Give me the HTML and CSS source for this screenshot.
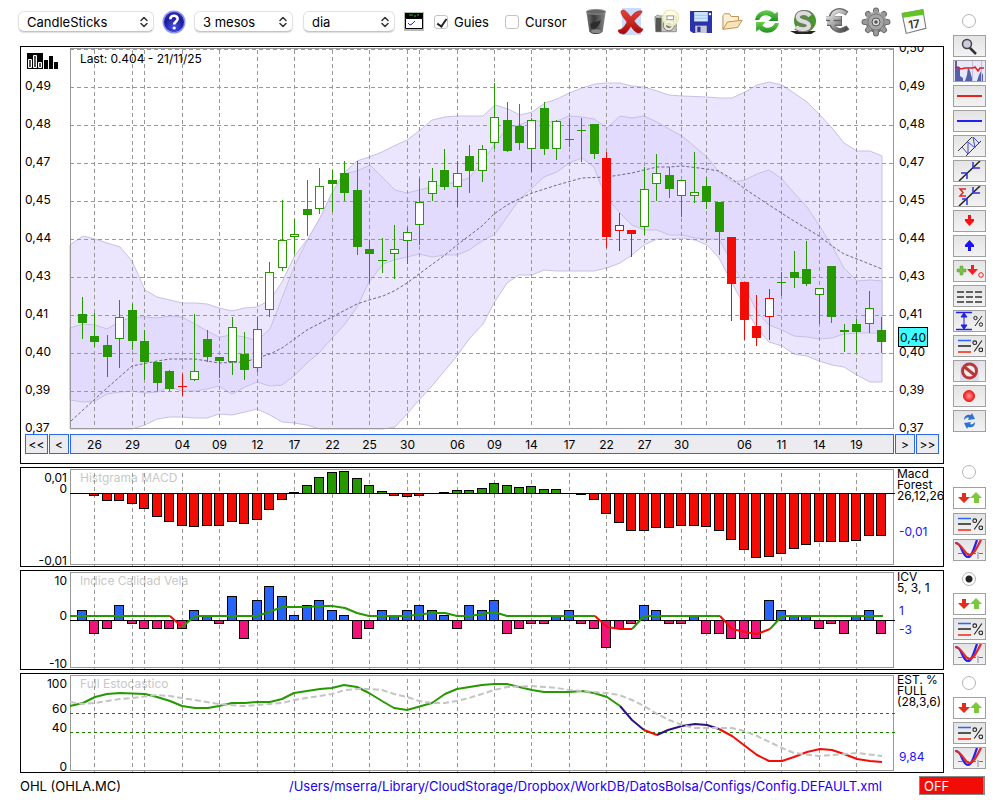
FILE: index.html
```
<!DOCTYPE html>
<html lang="ca">
<head>
    <meta charset="UTF-8">
    <meta name="viewport" content="width=device-width, initial-scale=1.0">
    <link rel="stylesheet" href="styles.css">
    <title>OHL (OHLA.MC)</title>
</head>
<body>
    <svg class="sprites" width="0" height="0" aria-hidden="true">
        <defs>
            <radialGradient id="g-help" cx=".5" cy=".75" r=".8"><stop offset="0" stop-color="#4a55e8"/><stop offset=".6" stop-color="#1c1c9c"/><stop offset="1" stop-color="#2c2cb8"/></radialGradient>
            <linearGradient id="g-bin"><stop offset="0" stop-color="#777"/><stop offset=".4" stop-color="#3a3a3a"/><stop offset="1" stop-color="#8a8a8a"/></linearGradient>
            <linearGradient id="g-red" x2="0" y2="1"><stop offset="0" stop-color="#e8433a"/><stop offset="1" stop-color="#a80808"/></linearGradient>
            <linearGradient id="g-green" x2="0" y2="1"><stop offset="0" stop-color="#6ad04a"/><stop offset="1" stop-color="#1f8f22"/></linearGradient>
            <linearGradient id="g-metal" x2="1" y2="1"><stop offset="0" stop-color="#f4f4f4"/><stop offset=".5" stop-color="#aaa"/><stop offset="1" stop-color="#444"/></linearGradient>
            <linearGradient id="g-steel" x2="0" y2="1"><stop offset="0" stop-color="#b4b4b4"/><stop offset="1" stop-color="#6a6a6a"/></linearGradient>
            <radialGradient id="g-dot"><stop offset="0" stop-color="#ff9a9a"/><stop offset="1" stop-color="#f01818"/></radialGradient>
        </defs>
        <symbol id="i-updown" viewBox="0 0 8 12"><path d="M1 4.5 4 1.5 7 4.5M1 7.5 4 10.5 7 7.5" fill="none" stroke="#333" stroke-width="1.5" stroke-linecap="round" stroke-linejoin="round"/></symbol>
        <symbol id="i-help" viewBox="0 0 24 24"><circle cx="12" cy="12" r="11.5" fill="#8f95f2"/><circle cx="12" cy="12" r="10" fill="url(#g-help)"/><path d="M8.3 9.2C8.3 4.6 15.8 4.8 15.6 9 15.4 11.4 12.2 11.6 12.2 14.6" fill="none" stroke="#fff" stroke-width="2.6"/><circle cx="12.2" cy="18" r="1.6" fill="#fff"/></symbol>
        <symbol id="i-window" viewBox="0 0 20 19"><path d="M0 0h20v19H0z" fill="#bbb"/><path d="M1 1h18v5H1z"/><path d="M5 3h4m1 1h2m1-1h2" stroke="#1c1" fill="none"/><path d="M1.500 6.500h17v10h-17z" fill="#fff" stroke="#000"/><path d="M4 11l2 2 2-1 3-3" fill="none" stroke="#22f"/></symbol>
        <symbol id="i-bin" viewBox="0 0 24 28"><path d="M2 4l3 20c2 4 12 4 14 0l3-20z" fill="url(#g-bin)"/><ellipse cx="12" cy="4" rx="10" ry="2.500" fill="#666" stroke="#8c8c8c"/><path d="M6 17c3-4 8-1 11-5-1 7-6 11-10 9z" fill="#2c2c30"/><ellipse cx="12" cy="24" rx="5" ry="2" fill="#888"/></symbol>
        <symbol id="i-delete" viewBox="0 0 26 27"><path d="M4 0h19v27H4z" fill="#c9dcfb"/><path d="M5 2c3 0 6 5 8 7 2-3 6-7 11-6 1 2-6 7-8 10 3 4 6 7 9 8-1 4-5 5-7 3-2-1-4-4-5-6-2 3-4 7-7 8-3 0-6-1-6-4 4 0 7-4 9-8C7 11 2 6 3 3z" fill="url(#g-red)" stroke="#a01010" stroke-width=".5"/></symbol>
        <symbol id="i-camera" viewBox="0 0 28 28"><path d="M1 9l3-2 2 1h18v17H2z" fill="#c8c8c0" stroke="#888"/><path d="M2 10h6v15H2z" fill="#555"/><circle cx="16" cy="18" r="6" fill="#e8e8e0" stroke="#777"/><circle cx="16" cy="18" r="3" fill="#777"/><circle cx="18" cy="10" r="8.500" fill="#fdfde0" fill-opacity=".75" stroke="#efebaa" stroke-width="1.500"/><rect x="14" y="8" width="7" height="4" fill="#fff" stroke="#999"/></symbol>
        <symbol id="i-save" viewBox="0 0 21 21"><path d="M0 0h21v21H3l-3-2z" fill="#2a33a8"/><path d="M4 1h13v9H4z" fill="#cfe6fb"/><path d="M4 4h13M4 7h13" stroke="#9bc4ec"/><path d="M5 14h11v7H5z" fill="#c8c8d4"/><path d="M7 15h3v5H7z" fill="#2a33a8"/><path d="M18 2h2v2h-2z" fill="#fff"/></symbol>
        <symbol id="i-folder" viewBox="0 0 24 20"><path d="M1 18V3l2-2h5l2 3h8v4" fill="#fdf0d0" stroke="#b98a4a"/><path d="M1 18l5-8 16-2-5 8z" fill="#fbe3b8" stroke="#b98a4a"/></symbol>
        <symbol id="i-refresh" viewBox="0 0 25 23"><path d="M1 10C3 0 15-2 20 4l3-2v9h-9l3-3C13 4 7 5 5 10z" fill="url(#g-green)"/><path d="M24 13C22 23 10 25 5 19l-3 2v-9h9l-3 3c4 4 10 3 12-2z" fill="url(#g-green)"/></symbol>
        <symbol id="i-dollar" viewBox="0 0 26 25"><path d="M0 22h26l-5 3H6z" fill="#222"/><circle cx="15" cy="12" r="11" fill="#49962f"/><path d="M14 1v4M14 19v4" stroke="#777" stroke-width="4"/><path d="M20 7C16 2 6 4 8 9c1 5 11 2 11 8-1 4-9 4-13 1" fill="none" stroke="#777" stroke-width="6"/><path d="M20 7C16 2 6 4 8 9c1 5 11 2 11 8-1 4-9 4-13 1" fill="none" stroke="#dcdcd8" stroke-width="4"/></symbol>
        <symbol id="i-euro" viewBox="0 0 26 26"><path d="M22 5C12-2 5 5 6 13s9 12 17 6M1 10h16M2 15h15" fill="none" stroke="#666" stroke-width="5"/><path d="M21 5C12-1 6 5 7 13s8 11 15 6M1 9.500h15M2 14.500h14" fill="none" stroke="url(#g-metal)" stroke-width="3.500"/></symbol>
        <symbol id="i-gear" viewBox="0 0 30 30"><path d="M15 3.500v23M3.500 15h23M7 7l16 16M23 7L7 23" stroke="#6c6c6c" stroke-width="6" stroke-linecap="round"/><circle cx="15" cy="15" r="10.500" fill="url(#g-steel)"/><path d="M15 3.500v23M3.500 15h23M7 7l16 16M23 7L7 23" stroke="#999" stroke-width="4" stroke-linecap="round"/><circle cx="15" cy="15" r="8" fill="#a6a6a6" stroke="#7c7c7c"/><circle cx="15" cy="15" r="4" fill="#ddd" stroke="#555"/><circle cx="15" cy="15" r="1.800" fill="#555"/></symbol>

        <symbol id="i-lens" viewBox="0 0 31 20"><path d="M15 11l7 7" stroke="#333" stroke-width="2.500"/><circle cx="13" cy="8" r="4.500" fill="#ccd" stroke="#444" stroke-width="1.500"/></symbol>
        <symbol id="i-history" viewBox="0 0 31 20"><path d="M0 0h31v20H0z" fill="#e8e8fa"/><path d="M1 20V0h2v6h3v9l3 2v3zM11 20l2-6 1-8 2 4 2 7v3zM23 20l2-6 2-4 2 4v6z" fill="#5560aa"/><path d="M18.500 0v20M27.500 0v20" stroke="#c0c0d8"/><path d="M1 7l3-1 3 2 4-1h8l2-1 3 4 2-3h4" fill="none" stroke="#e02020" stroke-width="1.500"/></symbol>
        <symbol id="i-redline" viewBox="0 0 31 20"><path d="M3 10h25" stroke="#e52222" stroke-width="2"/></symbol>
        <symbol id="i-blueline" viewBox="0 0 31 20"><path d="M3 10h25" stroke="#2222ee" stroke-width="2"/></symbol>
        <symbol id="i-channel" viewBox="0 0 31 20"><path d="M4 15L18 1M12 20L27 5" stroke="#333" fill="none"/><path d="M8 11l6 7V6l7 6-2-11 6 6" fill="none" stroke="#4444d8"/></symbol>
        <symbol id="i-trend" viewBox="0 0 31 20"><path d="M5 20L26 0" stroke="#222" stroke-width="1.500"/><path d="M7 12l6 0 0 6M19 1v6h7" fill="none" stroke="#3030d8" stroke-width="1.500"/></symbol>
        <symbol id="i-sumtrend" viewBox="0 0 31 20"><path d="M5 20L26 0" stroke="#222" stroke-width="1.500"/><path d="M8 13h5v6M19 1v6h7" fill="none" stroke="#3030d8" stroke-width="1.500"/><path d="M12 3H6l3 3.500L6 10h6" fill="none" stroke="#e02828" stroke-width="1.500"/></symbol>
        <symbol id="i-down" viewBox="0 0 31 20"><path d="M14 4h3v4h3v2l-4.500 5L11 10V8h3z" fill="#fa1010"/></symbol>
        <symbol id="i-up" viewBox="0 0 31 20"><path d="M14 15h3v-4h3V9l-4.500-5L11 9v2h3z" fill="#1a10fa"/></symbol>
        <symbol id="i-marks" viewBox="0 0 31 20"><path d="M6 5h3v3h3v3H9v3H6v-3H3V8h3z" fill="#7ac048" stroke="#5a9a30" stroke-width=".500"/><path d="M17 4h3v4h4l-5.500 6L13 8h4z" fill="#e22"/><circle cx="27" cy="14" r="2.300" fill="none" stroke="#e22"/></symbol>
        <symbol id="i-dashes" viewBox="0 0 31 20"><path d="M3 6h25M3 11h25M3 16h25" stroke="#333" stroke-width="1.500" stroke-dasharray="7 2"/></symbol>
        <symbol id="i-percent" viewBox="0 0 10 12"><path d="M9 1L2 11" stroke="#222" fill="none"/><circle cx="2.500" cy="3" r="1.700" fill="none" stroke="#222"/><circle cx="8" cy="9.500" r="1.700" fill="none" stroke="#222"/></symbol>
        <symbol id="i-range" viewBox="0 0 31 20"><path d="M2 1.500h16M2 18.500h16" stroke="#2020e8" stroke-width="1.500"/><path d="M10 3v14M7 6l3-4 3 4zM7 14l3 4 3-4z" fill="#2020e8" stroke="#2020e8"/><use href="#i-percent" x="19" y="4" width="10" height="12"/></symbol>
        <symbol id="i-levels" viewBox="0 0 31 20"><path d="M4 4.500h13" stroke="#2a66f8" stroke-width="1.500"/><path d="M4 10h13" stroke="#222" stroke-width="1.500"/><path d="M4 16h13" stroke="#f05848" stroke-width="2"/><use href="#i-percent" x="18" y="3" width="11" height="14"/></symbol>
        <symbol id="i-forbid" viewBox="0 0 31 20"><path d="M6 0h19v20H6z" fill="#dcdcec"/><circle cx="15.500" cy="10" r="7" fill="#eee" stroke="#b83838" stroke-width="3"/><path d="M10.500 6l10 8" stroke="#b83838" stroke-width="3"/></symbol>
        <symbol id="i-dot" viewBox="0 0 31 20"><circle cx="15" cy="10" r="5.500" fill="url(#g-dot)" stroke="#e22"/></symbol>
        <symbol id="i-sync" viewBox="0 0 31 20"><path d="M10 9c0-5 4-6 7-5l1-2 3 6-7 1 1-2c-2-1-3 0-5 2zM21 11c0 5-4 6-7 5l-1 2-3-6 7-1-1 2c2 1 3 0 5-2z" fill="#2b74d0"/></symbol>
        <symbol id="i-swap" viewBox="0 0 31 20"><path d="M8 5h4v4h4l-6 6-6-6h4z" fill="#e22d1e"/><path d="M20 15h5v-5h3l-6-6-6 6h4z" fill="#7cc83c"/></symbol>
        <symbol id="i-cross" viewBox="0 0 31 20"><path d="M4 13.500h25" stroke="#3a3" stroke-dasharray="4 3"/><path d="M24 12v7" stroke="#88a"/><path d="M2 3c6 0 6 14 12 14 4 0 6-9 9-17" fill="none" stroke="#2020f0" stroke-width="2.200"/><path d="M1 3c7 0 9 11 14 12 5 0 8-8 12-15" fill="none" stroke="#e22828" stroke-width="2.200"/></symbol>
    </svg>

    <div class="layout">
        <main class="main">
            <div class="toolbar">
                <span class="select select-type">
                    <select aria-label="Tipus de gràfic"><option>CandleSticks</option><option>Línia</option></select>
                    <svg><use href="#i-updown"/></svg>
                </span>
                <button class="icon help" aria-label="Ajuda"><svg><use href="#i-help"/></svg></button>
                <span class="select select-range">
                    <select aria-label="Període"><option>3 mesos</option><option>6 mesos</option></select>
                    <svg><use href="#i-updown"/></svg>
                </span>
                <span class="select select-unit">
                    <select aria-label="Unitat"><option>dia</option><option>setmana</option></select>
                    <svg><use href="#i-updown"/></svg>
                </span>
                <button class="icon window" aria-label="Finestra"><svg><use href="#i-window"/></svg></button>
                <label class="check"><input type="checkbox" checked>Guies</label>
                <label class="check"><input type="checkbox">Cursor</label>
                <div class="actions">
                    <button class="icon" aria-label="Paperera"><svg><use href="#i-bin"/></svg></button>
                    <button class="icon" aria-label="Esborrar"><svg><use href="#i-delete"/></svg></button>
                    <button class="icon" aria-label="Captura"><svg><use href="#i-camera"/></svg></button>
                    <button class="icon small" aria-label="Desar"><svg><use href="#i-save"/></svg></button>
                    <button class="icon small" aria-label="Obrir"><svg><use href="#i-folder"/></svg></button>
                    <button class="icon" aria-label="Actualitzar"><svg><use href="#i-refresh"/></svg></button>
                    <button class="icon" aria-label="Dòlar"><svg><use href="#i-dollar"/></svg></button>
                    <button class="icon" aria-label="Euro"><svg><use href="#i-euro"/></svg></button>
                    <button class="icon large" aria-label="Configuració"><svg><use href="#i-gear"/></svg></button>
                    <button class="icon" aria-label="Calendari">
                        <svg viewBox="0 0 25 25"><path d="M1 5l20-4 3 18-19 5z" fill="#fafafa" stroke="#777"/><path d="M1 4l20-3 1 5-20 3z" fill="#62c424"/><text class="day" x="7" y="19">17</text></svg>
                    </button>
                </div>
            </div>

            <section class="panel panel-price">
                <svg class="chart" id="price" viewBox="21 47 922 387"></svg>
                <nav class="dates">
                    <button class="wide">&lt;&lt;</button>
                    <button>&lt;</button>
                    <svg id="dates" viewBox="70 434 824 20"></svg>
                    <button>&gt;</button>
                    <button class="wide">&gt;&gt;</button>
                </nav>
            </section>
            <section class="panel"><svg class="chart" id="macd" viewBox="21 468 922 98"></svg></section>
            <section class="panel"><svg class="chart" id="icv" viewBox="21 571 922 98"></svg></section>
            <section class="panel"><svg class="chart" id="stoch" viewBox="21 674 922 98"></svg></section>
        </main>

        <aside class="side">
            <div class="tools">
                <input type="radio" name="panel" aria-label="Preu">
                <button aria-label="Lupa"><svg><use href="#i-lens"/></svg></button>
                <button aria-label="Històric"><svg><use href="#i-history"/></svg></button>
                <button aria-label="Línia vermella"><svg><use href="#i-redline"/></svg></button>
                <button aria-label="Línia blava"><svg><use href="#i-blueline"/></svg></button>
                <button aria-label="Canal"><svg><use href="#i-channel"/></svg></button>
                <button aria-label="Tendència"><svg><use href="#i-trend"/></svg></button>
                <button aria-label="Suma tendència"><svg><use href="#i-sumtrend"/></svg></button>
                <button aria-label="Fletxa avall"><svg><use href="#i-down"/></svg></button>
                <button aria-label="Fletxa amunt"><svg><use href="#i-up"/></svg></button>
                <button aria-label="Marques"><svg><use href="#i-marks"/></svg></button>
                <button aria-label="Nivells"><svg><use href="#i-dashes"/></svg></button>
                <button aria-label="Rang"><svg><use href="#i-range"/></svg></button>
                <button aria-label="Percentatges"><svg><use href="#i-levels"/></svg></button>
                <button aria-label="Prohibit"><svg><use href="#i-forbid"/></svg></button>
                <button aria-label="Gravar"><svg><use href="#i-dot"/></svg></button>
                <button aria-label="Sincronitzar"><svg><use href="#i-sync"/></svg></button>
            </div>
            <div class="tools tools-macd">
                <input type="radio" name="panel" aria-label="MACD">
                <button class="plain" aria-label="Moure"><svg><use href="#i-swap"/></svg></button>
                <button aria-label="Percentatges"><svg><use href="#i-levels"/></svg></button>
                <button aria-label="Creuament"><svg><use href="#i-cross"/></svg></button>
            </div>
            <div class="tools tools-icv">
                <input type="radio" name="panel" aria-label="ICV" checked>
                <button class="plain" aria-label="Moure"><svg><use href="#i-swap"/></svg></button>
                <button aria-label="Percentatges"><svg><use href="#i-levels"/></svg></button>
                <button aria-label="Creuament"><svg><use href="#i-cross"/></svg></button>
            </div>
            <div class="tools tools-stoch">
                <input type="radio" name="panel" aria-label="Estocàstic">
                <button class="plain" aria-label="Moure"><svg><use href="#i-swap"/></svg></button>
                <button aria-label="Percentatges"><svg><use href="#i-levels"/></svg></button>
                <button aria-label="Creuament"><svg><use href="#i-cross"/></svg></button>
            </div>
        </aside>
    </div>

    <footer class="status">
        <span>OHL (OHLA.MC)</span>
        <span class="path">/Users/mserra/Library/CloudStorage/Dropbox/WorkDB/DatosBolsa/Configs/Config.DEFAULT.xml</span>
        <button class="off">OFF</button>
    </footer>

    <script src="script.js"></script>
</body>
</html>
```

FILE: styles.css
```
* {
    margin: 0;
    padding: 0;
    box-sizing: border-box;
    font-family: Inter, "Liberation Sans", sans-serif;
}
body {
    background-color: #fff;
    color: #000;
    font-size: 13px;
}
button {
    cursor: pointer;
}
.sprites {
    position: absolute;
}
.layout {
    display: flex;
    gap: 9px;
    padding-right: 14px;
}
.main {
    flex: 1;
    min-width: 0;
    display: flex;
    flex-direction: column;
    gap: 3px;
    padding-left: 20px;
}

/* barra superior */
.toolbar {
    display: flex;
    align-items: center;
    height: 43px;
    margin-left: -2px;
    padding-right: 17px;
}
.select {
    position: relative;
}
.select select {
    appearance: none;
    width: 100%;
    height: 21px;
    padding-left: 8px;
    border: 1px solid #e2e2e2;
    border-bottom-color: #c4c4c4;
    border-radius: 6px;
    background-color: #fff;
    box-shadow: 0 1px 1px #ddd;
    font-size: 13px;
    color: #000;
}
.select svg {
    position: absolute;
    right: 6px;
    top: 5px;
    width: 8px;
    height: 12px;
    pointer-events: none;
}
.select-type {
    width: 136px;
}
.select-range {
    width: 99px;
    margin-right: 10px;
}
.select-unit {
    width: 92px;
}
.icon {
    width: 26px;
    height: 27px;
    border: none;
    background: none;
}
.icon svg {
    display: block;
    width: 100%;
    height: 100%;
}
.icon.small {
    width: 22px;
    height: 22px;
}
.icon.large {
    width: 30px;
    height: 30px;
}
.icon.help {
    width: 24px;
    height: 24px;
    margin: 0 8px;
}
.icon.window {
    width: 20px;
    height: 19px;
    margin: 0 10px 0 9px;
}
.day {
    font-size: 11px;
    font-weight: 600;
    fill: #333;
    transform: rotate(-8deg);
    transform-origin: 12px 14px;
}
.check {
    display: flex;
    align-items: center;
    gap: 6px;
    margin-right: 16px;
}
.check input {
    appearance: none;
    width: 14px;
    height: 14px;
    border: 1px solid #c4c4c4;
    border-radius: 3px;
    background-color: #fff;
}
.check input:checked::after {
    content: "";
    display: block;
    width: 4px;
    height: 8px;
    margin: 1px 0 0 4px;
    border: solid #222;
    border-width: 0 2px 2px 0;
    transform: rotate(35deg);
}
.actions {
    flex: 1;
    display: flex;
    align-items: center;
    justify-content: space-between;
}

/* gràfics */
.panel {
    border: 1px solid #000;
}
.chart {
    display: block;
    width: 100%;
}
.chart text, .dates text {
    font-size: 12px;
}
.frame, .guide {
    fill: none;
    stroke: #999;
}
.guide {
    stroke-dasharray: 4 3;
}
.zero {
    stroke: #000;
}
.title {
    fill: #c8c8c8;
}
.value {
    fill: #2010ff;
}
.end {
    text-anchor: end;
}
.band-outer {
    fill: #ebe6fe;
    stroke: #c6c1e4;
}
.band-inner {
    fill: #e3dbfe;
    stroke: #c6c1e4;
}
.mean {
    fill: none;
    stroke: #6e6688;
    stroke-dasharray: 3 2;
}
.up {
    fill: #269900;
    stroke: #269900;
}
.down {
    fill: #f20c06;
    stroke: #f20c06;
}
.hollow {
    fill: #fff;
}
.bar {
    stroke: #000;
}
.gain {
    fill: #269900;
}
.loss {
    fill: #f20c06;
}
.good {
    fill: #2864fa;
}
.bad {
    fill: #f0147a;
}
.line {
    fill: none;
    stroke-width: 2;
    stroke-linejoin: round;
}
.green {
    stroke: #269900;
}
.red {
    stroke: #f40c06;
}
.navy {
    stroke: #2c1480;
}
.signal {
    stroke: #c4c4c4;
    stroke-dasharray: 6 3;
}
.limit-high, .limit-low {
    stroke: #e01414;
    stroke-dasharray: 3 3;
}
.limit-low {
    stroke: #1a7a00;
}
.last-price {
    fill: #40ffff;
    stroke: #000;
}
.panel-price {
    padding-bottom: 9px;
}
.dates {
    display: flex;
    gap: 1px;
    padding: 0 4px;
}
.dates button {
    flex: none;
    width: 20px;
    border: 1px solid #2a66f0;
    background-color: #ebebf0;
    font-size: 12px;
}
.dates button.wide {
    width: 23px;
}
.dates svg {
    flex: 1;
    min-width: 0;
    display: block;
}
.dates text {
    text-anchor: middle;
}
.dates rect {
    fill: #ebebf0;
    stroke: #2a66f0;
}

/* botons laterals */
.side {
    flex: none;
    width: 33px;
}
.tools {
    display: flex;
    flex-direction: column;
    gap: 3px;
    padding-top: 14px;
}
.tools input {
    appearance: none;
    flex: none;
    width: 14px;
    height: 14px;
    margin: 0 9px 4px;
    border: 1px solid #b4b4b4;
    border-radius: 50%;
    background-color: #fff;
}
.tools input:checked {
    background-image: radial-gradient(#222 0 3px, transparent 4px);
}
.tools button {
    height: 22px;
    border: 1px solid #a0a0a0;
    background-image: linear-gradient(#e4e4e4, #f2f2f2);
}
.tools button.plain {
    background-image: none;
    background-color: #fff;
}
.tools svg {
    display: block;
    width: 31px;
    height: 20px;
}
.tools-macd {
    gap: 4px;
    padding-top: 33px;
}
.tools-icv, .tools-stoch {
    padding-top: 11px;
}

.status {
    display: flex;
    align-items: center;
    padding: 3px 15px 4px 20px;
}
.path {
    margin-left: auto;
    color: #2000f4;
}
.off {
    width: 66px;
    height: 19px;
    margin-left: 37px;
    padding-left: 4px;
    border: 1px solid #888;
    border-width: 1px 2px 1px 1px;
    background-color: #f20c06;
    color: #fff;
    font-size: 13px;
    text-align: left;
}
```

FILE: script.js
```
// tots els gràfics comparteixen el mateix eix X
const LEFT = 70.5;
const RIGHT = 893.5;
const STEP = 12.486;
const xAt = i => Math.floor(70 + STEP * (i + 1)) + 0.5;

const guides = [[1, '26'], [4, '29'], [5, ''], [8, '04'], [11, '09'], [14, '12'], [17, '17'], [20, '22'],
    [23, '25'], [26, '30'], [27, ''], [30, '06'], [33, '09'], [36, '14'], [39, '17'], [42, '22'],
    [45, '27'], [48, '30'], [50, ''], [53, '06'], [56, '11'], [59, '14'], [62, '19']];

// màxim, mínim, dalt i baix del cos, tipus (g verd, r vermell, majúscula = buida)
const candles = [
    [297, 339, 314, 323, 'g'], [313, 347, 336, 342, 'g'], [335, 377, 345, 357, 'g'], [300, 368, 317, 339, 'G'],
    [304, 350, 310, 341, 'g'], [330, 380, 341, 362, 'g'], [362, 391, 362, 383, 'g'], [370, 391, 371, 389, 'g'],
    [374, 396, 386, 387, 'r'], [314, 381, 371, 380, 'G'], [330, 362, 339, 357, 'g'], [357, 378, 357, 361, 'g'],
    [317, 375, 327, 362, 'G'], [332, 380, 354, 370, 'g'], [317, 372, 329, 368, 'G'], [262, 317, 272, 310, 'G'],
    [200, 271, 240, 268, 'G'], [219, 254, 234, 237, 'G'], [180, 236, 209, 215, 'g'], [168, 214, 186, 209, 'G'],
    [170, 212, 180, 184, 'g'], [161, 201, 173, 193, 'g'], [161, 255, 190, 247, 'g'], [240, 283, 249, 254, 'g'],
    [238, 273, 260, 261, 'g'], [225, 279, 249, 254, 'G'], [227, 264, 232, 241, 'G'], [178, 245, 202, 225, 'G'],
    [168, 201, 181, 194, 'G'], [149, 190, 170, 187, 'g'], [161, 207, 173, 187, 'G'], [145, 193, 156, 171, 'g'],
    [145, 182, 149, 171, 'G'], [83, 149, 117, 143, 'G'], [102, 152, 120, 151, 'g'], [104, 150, 126, 143, 'g'],
    [118, 172, 120, 149, 'G'], [102, 155, 108, 149, 'g'], [120, 160, 121, 149, 'G'], [118, 147, 139, 140, 'g'],
    [118, 162, 130, 131, 'g'], [124, 159, 124, 154, 'g'], [152, 248, 158, 237, 'r'], [213, 251, 225, 231, 'R'],
    [230, 257, 230, 234, 'r'], [167, 235, 189, 227, 'G'], [154, 201, 173, 184, 'G'], [167, 198, 175, 189, 'g'],
    [180, 217, 180, 196, 'G'], [152, 203, 192, 196, 'G'], [177, 209, 186, 202, 'g'], [202, 255, 202, 232, 'g'],
    [237, 321, 237, 284, 'r'], [282, 340, 282, 320, 'r'], [295, 346, 326, 338, 'r'], [289, 340, 298, 317, 'R'],
    [272, 296, 282, 283, 'g'], [251, 288, 272, 278, 'g'], [241, 286, 269, 284, 'g'], [288, 324, 288, 295, 'G'],
    [266, 323, 266, 317, 'g'], [324, 352, 330, 332, 'g'], [319, 353, 324, 332, 'g'], [291, 333, 308, 324, 'G'],
    [317, 353, 330, 342, 'g']
];

const outerTop = '70,245 83,236 95,239 107,243 120,247 132,261 145,290 157,297 170,300 182,303 195,303 207,304 219,308 232,311 245,308 257,307 270,300 282,282 294,257 309,237 320,218 332,193 345,172 357,161 369,157 382,152 394,146 407,140 419,131 432,120 445,117 457,116 483,116 495,105 508,109 520,115 532,112 545,103 557,99 569,93 582,88 595,84 606,83 620,83 632,86 644,87 657,91 669,95 682,96 707,97 719,98 732,98 745,92 757,85 769,82 782,85 794,93 807,102 819,114 832,128 844,143 857,151 870,151 882,156';
const outerBottom = '70,429 132,429 145,425 157,419 170,417 182,417 195,418 207,418 219,414 232,415 245,412 257,409 270,415 282,422 294,423 307,425 320,429 383,429 395,427 407,414 419,400 432,386 457,356 469,339 483,324 494,303 507,283 519,275 532,275 544,270 557,271 569,271 594,271 607,268 620,263 632,255 644,245 657,239 669,239 682,238 695,240 707,245 719,258 732,283 745,307 757,328 769,342 782,346 794,354 807,356 819,361 832,365 844,367 857,375 870,382 882,382';
const innerTop = '70,328 83,324 95,325 107,329 119,322 132,317 145,317 157,318 170,316 182,317 195,324 207,331 219,337 232,335 245,337 257,341 270,329 282,298 294,267 309,237 320,218 332,193 343,174 357,171 370,165 382,177 395,190 407,193 419,190 432,187 445,184 457,182 469,178 482,163 494,145 507,128 519,125 532,120 544,122 557,121 569,116 582,117 594,119 607,128 620,116 632,118 644,116 657,122 669,129 682,136 707,157 719,172 733,182 745,180 757,174 769,170 782,179 794,193 807,207 819,225 832,246 844,268 857,281 870,280 882,281';
const innerBottom = '70,400 83,402 95,401 107,394 120,392 132,391 145,393 157,392 170,387 182,391 195,391 207,389 219,386 232,394 245,387 257,382 270,386 282,385 294,376 307,363 319,353 332,338 345,324 357,307 369,282 383,264 394,260 407,257 419,254 432,257 445,255 457,255 469,250 482,241 495,234 507,217 519,200 532,188 544,177 557,172 569,163 582,158 594,167 600,183 607,198 620,213 632,225 644,230 657,230 669,235 682,235 695,238 707,239 719,239 732,263 745,287 757,312 769,325 782,330 794,336 807,337 819,339 832,338 844,334 857,333 882,333';
const mean = '71,421 107,388 132,366 157,361 170,359 195,359 219,363 245,362 257,358 270,354 282,348 307,330 332,317 357,304 369,300 383,296 394,291 407,283 419,274 445,255 457,245 482,226 494,214 507,205 519,199 532,193 557,185 582,178 607,177 632,173 644,170 657,167 669,167 682,166 707,169 719,171 732,179 745,189 769,205 794,221 819,236 832,246 844,254 857,259 882,269';

const macd = [0, -2, -7, -7, -10, -15, -23, -28, -32, -33, -32, -32, -28, -30, -26, -16, -6, 1, 8, 16, 21, 22,
    15, 8, 2, -2, -3, -2, 0, 1, 3, 3, 5, 10, 8, 6, 7, 4, 4, 0, -1, -6, -20, -29, -37, -37, -34, -34, -32, -32,
    -33, -37, -46, -56, -64, -63, -60, -55, -51, -48, -48, -48, -47, -42, -42];
const icv = [10, -13, -8, 15, -3, -8, -8, -8, -8, 10, 4, -3, 24, -18, 20, 34, 24, 5, 15, 20, 10, 5, -18, -8,
    10, 4, 10, 15, 10, 5, -8, 15, 10, 20, -13, -8, -3, -3, 4, 10, -3, -8, -27, -8, -3, 15, 10, -3, -3, 4,
    -13, -13, -18, -18, -18, 20, 10, 4, 4, -8, -3, -13, 4, 10, -13];

const line = (points, cls) => `<polyline class="line ${cls}" points="${points}"/>`;
const text = (x, y, label, cls = '') => `<text x="${x}" y="${y}" class="${cls}">${label}</text>`;
const hline = (y, cls, to = 895) => `<line class="${cls}" x1="70" x2="${to}" y1="${y}" y2="${y}"/>`;
const frame = (top, bottom) => `<rect class="frame" x="${LEFT}" y="${top}" width="${RIGHT - LEFT}" height="${bottom - top}"/>`;
const vlines = (top, bottom) => guides.map(([i]) =>
    `<line class="guide" x1="${xAt(i)}" x2="${xAt(i)}" y1="${top}" y2="${bottom}"/>`).join('');
const band = (top, bottom, cls) =>
    `<polygon class="${cls}" points="${top} ${bottom.split(' ').reverse().join(' ')}"/>`;

function bars(values, zero, positive, negative) {
    return values.map((v, i) => {
        if (v === 0) return '';
        const y = v > 0 ? zero - v : zero;
        return `<rect class="bar ${v > 0 ? positive : negative}" x="${xAt(i) - 5}" y="${y}" width="9" height="${Math.abs(v)}"/>`;
    }).join('');
}

function candle([high, low, top, bottom, type], i) {
    const x = xAt(i);
    const cls = type.toLowerCase() === 'g' ? 'up' : 'down';
    const hollow = type < 'a' ? 'hollow' : '';
    const body = bottom - top > 1
        ? `<rect class="${cls} ${hollow}" x="${x - 4}" y="${top + 0.5}" width="8" height="${bottom - top - 1}"/>`
        : `<line class="${cls}" x1="${x - 4.5}" x2="${x + 4.5}" y1="${top + 0.5}" y2="${top + 0.5}"/>`;
    return `<line class="${cls}" x1="${x}" x2="${x}" y1="${high}" y2="${low}"/>${body}`;
}

function drawPrice() {
    let out = band(outerTop, outerBottom, 'band-outer') + band(innerTop, innerBottom, 'band-inner');
    out += frame(48.5, 428.5) + vlines(50, 428);
    for (let y = 49.5; y < 428; y += 38) out += hline(y, 'guide');
    out += `<polyline class="mean" points="${mean}"/>`;
    out += candles.map(candle).join('');
    const labels = ['0,50', '0,49', '0,48', '0,47', '0,45', '0,44', '0,43', '0,41', '0,40', '0,39', '0,37'];
    labels.forEach((label, n) => {
        const y = 52 + n * 38;
        if (n > 0) out += text(25, y, label);
        out += text(899, y, label);
    });
    out += '<rect class="last-price" x="898.5" y="327.5" width="29" height="19"/>' + text(900, 342, '0,40');
    out += text(80, 63, 'Last: 0.404 - 21/11/25');
    out += '<path d="M27 53h16v16H27zM44 60h4v9h-4zM49 56h4v13h-4zM54 62h4v7h-4z"/>'
        + '<path d="M28.500 59.500h3v8h-3zM33.500 55.500h3v12h-3zM38.500 62.500h3v5h-3z" fill="#555" stroke="#fff"/>';
    document.querySelector('#price').innerHTML = out;
}

function drawDates() {
    document.querySelector('#dates').innerHTML = '<rect x="70.500" y="434.500" width="823" height="19"/>'
        + guides.map(([i, label]) => text(xAt(i), 449, label)).join('');
}

function drawMacd() {
    document.querySelector('#macd').innerHTML = text(80, 482, 'Histgrama MACD', 'title')
        + frame(469.5, 564.5) + vlines(473, 566)
        + bars(macd, 493.5, 'gain', 'loss') + hline(493.5, 'zero')
        + text(67, 482, '0,01', 'end') + text(67, 493, '0', 'end') + text(67, 565, '-0,01', 'end')
        + text(897, 478, 'Macd') + text(897, 489, 'Forest') + text(897, 500, '26,12,26')
        + text(899, 536, '-0,01', 'value');
}

function drawIcv() {
    document.querySelector('#icv').innerHTML = text(80, 585, 'Indice Calidad Vela', 'title')
        + frame(572.5, 667.5) + vlines(576, 669)
        + bars(icv, 620.5, 'good', 'bad') + hline(620.5, 'zero')
        + line('70,616 170,616', 'green') + line('170,616 182,627', 'red')
        + line('182,627 195,616 257,616 269,612 282,607 307,607 320,606 332,606 345,608 357,613 369,616 407,616 432,613 445,613 457,616 470,616 482,614 494,612 507,616 595,616', 'green')
        + line('595,616 607,627 620,629 632,629', 'red') + line('632,629 644,616 720,616', 'green')
        + line('720,616 732,629 745,632 757,634 770,629', 'red') + line('770,629 782,616 883,616', 'green')
        + text(67, 585, '10', 'end') + text(67, 620, '0', 'end') + text(67, 668, '-10', 'end')
        + text(897, 581, 'ICV') + text(897, 592, '5, 3, 1')
        + text(899, 615, '1', 'value') + text(899, 634, '-3', 'value');
}

function drawStoch() {
    document.querySelector('#stoch').innerHTML = text(80, 688, 'Full Estocastico', 'title')
        + frame(675.5, 770.5) + vlines(679, 772)
        + hline(713.5, 'limit-high') + hline(732.5, 'limit-low')
        + line('70,706 83,703 95,697 107,694 120,693 145,694 157,697 170,701 182,706 195,708 208,708 219,706 232,703 245,703 257,702 270,702 282,699 294,693 320,689 332,688 344,685 357,687 369,693 382,701 394,708 407,710 432,703 445,694 457,689 482,685 494,684 507,684 519,687 532,690 544,692 569,692 582,691 594,693 607,697 620,706', 'green')
        + line('620,706 632,720 644,730', 'navy') + line('644,730 657,735', 'red')
        + line('657,735 668,730 682,726 695,724 707,725 719,729', 'navy')
        + line('719,729 732,736 757,755 769,761 782,761 794,757 807,752 820,749 832,750 844,754 857,759 870,761 882,762', 'red')
        + line('70,702 83,704 95,703 120,699 132,698 157,695 170,696 182,698 207,702 219,704 244,706 257,705 282,703 294,700 332,694 345,690 357,689 369,689 382,690 394,694 407,697 419,701 432,703 445,703 457,701 469,698 482,694 494,690 507,687 532,686 557,688 569,690 582,691 607,693 619,695 632,700 644,706 657,714 669,720 682,725 694,728 732,728 744,731 757,736 782,748 794,753 819,756 857,753 882,756', 'signal')
        + text(67, 688, '100', 'end') + text(67, 713, '60', 'end') + text(67, 732, '40', 'end') + text(67, 771, '0', 'end')
        + text(897, 684, 'EST. %') + text(897, 695, 'FULL') + text(897, 706, '(28,3,6)')
        + text(899, 761, '9,84', 'value');
}

drawPrice();
drawDates();
drawMacd();
drawIcv();
drawStoch();
```
